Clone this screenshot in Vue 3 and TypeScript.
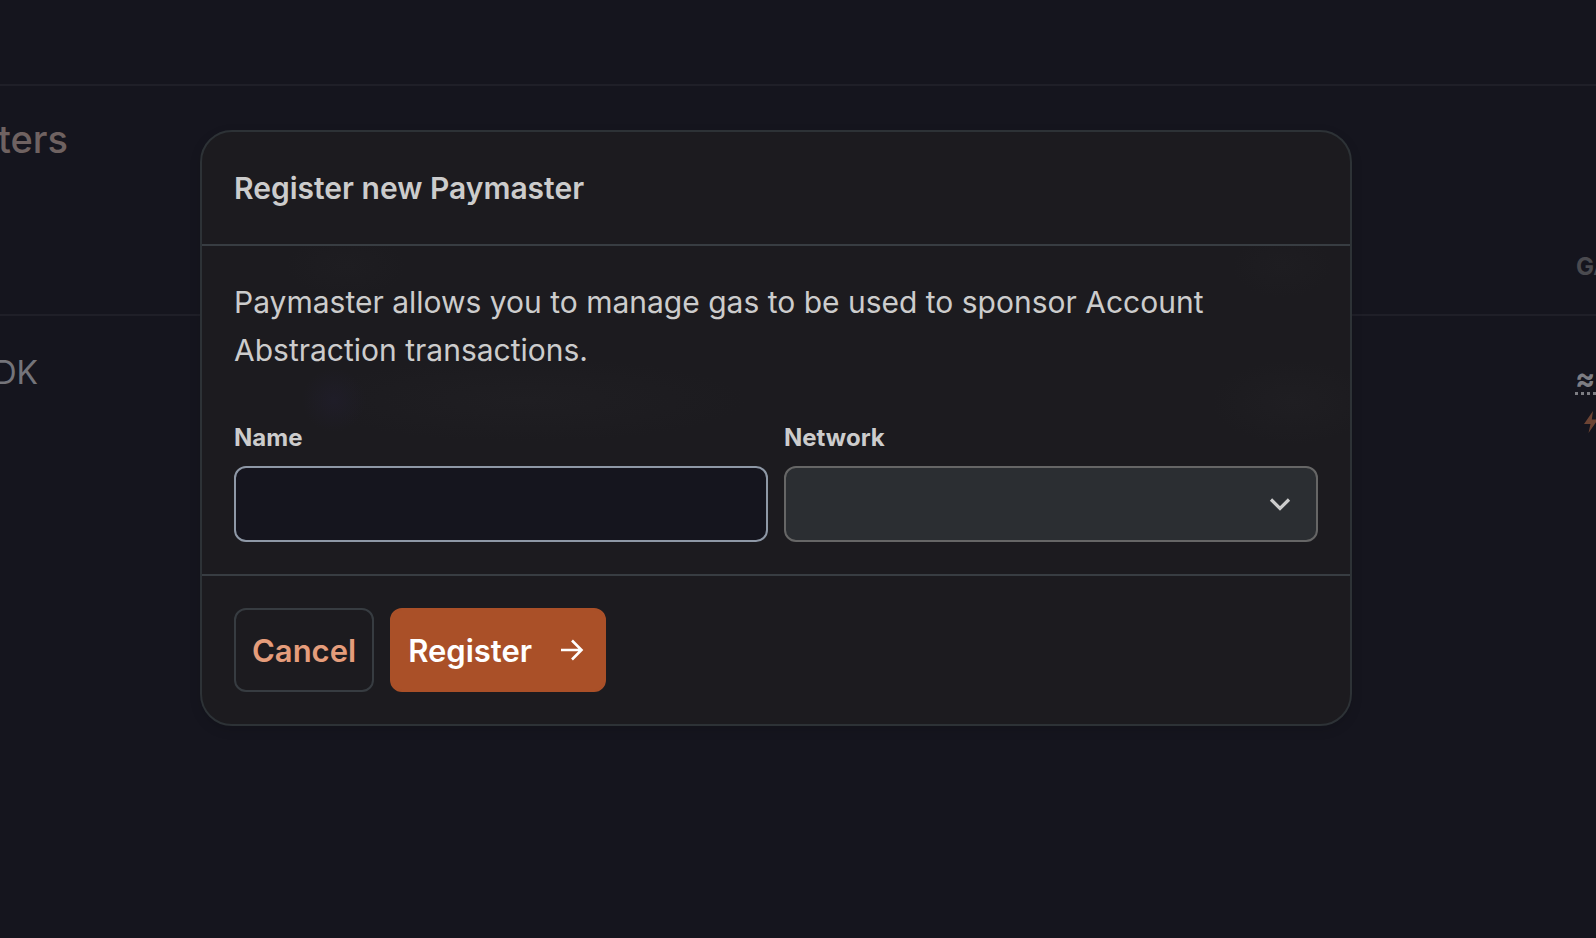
<script setup lang="ts">
import { ref } from 'vue'

const name = ref('')
const network = ref('')
</script>

<template>
  <div class="page">
    <div class="topbar"></div>
    <main>
      <h1 class="page-title">ters</h1>
      <div class="row row-head"><span class="column-label">GA</span></div>
      <div class="row row-item">
        <span class="item-name">DK</span>
        <div class="usage">
          <span class="approx">≈</span>
          <svg class="bolt" viewBox="0 0 20 24" aria-hidden="true">
            <path d="M10 1 L1 14 H7.500 L5.500 23 L15 9.500 H8.800 Z" />
          </svg>
        </div>
      </div>
    </main>

    <div class="overlay">
      <form class="dialog" role="dialog" aria-labelledby="dialog-title" @submit.prevent>
        <header class="dialog-head">
          <h2 id="dialog-title">Register new Paymaster</h2>
        </header>
        <section class="dialog-body">
          <p>Paymaster allows you to manage gas to be used to sponsor Account Abstraction transactions.</p>
          <div class="fields">
            <div class="field">
              <label for="name">Name</label>
              <input id="name" v-model="name" type="text" />
            </div>
            <div class="field">
              <label for="network">Network</label>
              <div class="select-wrap">
                <select id="network" v-model="network">
                  <option value=""></option>
                </select>
                <svg class="chevron" viewBox="0 0 24 24" aria-hidden="true">
                  <path d="M3 7.500 L12 16.500 L21 7.500" />
                </svg>
              </div>
            </div>
          </div>
        </section>
        <footer class="dialog-foot">
          <button type="button" class="cancel">Cancel</button>
          <button type="submit" class="register">
            <span>Register</span>
            <svg class="arrow" viewBox="0 0 32 32" aria-hidden="true">
              <path d="M5 16 H26 M16 6.500 L25.500 16 L16 25.500" />
            </svg>
          </button>
        </footer>
      </form>
    </div>
  </div>
</template>

<style>
body {
  margin: 0;
  background: #15151e;
}
</style>

<style scoped>
.page {
  position: relative;
  box-sizing: border-box;
  min-height: 100vh;
  overflow: hidden;
  background: #15151e;
  color: #cccccc;
  font-family: Inter, "Liberation Sans", sans-serif;
}
.page * {
  box-sizing: border-box;
}
.topbar {
  height: 86px;
  border-bottom: 2px solid #1f1f28;
}
.page-title {
  display: flex;
  justify-content: flex-end;
  width: 68px;
  margin: 0;
  padding-top: 28px;
  color: #6f6261;
  font-size: 38px;
  font-weight: 500;
  line-height: 50px;
}
.row {
  display: flex;
  justify-content: space-between;
}
.row-head {
  justify-content: flex-end;
  height: 152px;
  padding-top: 86px;
  border-bottom: 2px solid #1f1f28;
}
.column-label {
  width: 20px;
  color: #4a4a4f;
  font-size: 24px;
  font-weight: 700;
  line-height: 34px;
}
.item-name {
  display: flex;
  justify-content: flex-end;
  width: 38px;
  padding-top: 32px;
  color: #74747a;
  font-size: 32px;
  line-height: 50px;
}
.usage {
  display: flex;
  flex-direction: column;
  width: 21px;
  padding-top: 48px;
}
.approx {
  height: 31px;
  border-bottom: 3px dotted #7d7d83;
  color: #7d7d83;
  font-size: 30px;
  font-weight: 700;
  line-height: 28px;
}
.bolt {
  width: 20px;
  height: 24px;
  margin: 15px 0 0 8px;
  fill: #6d4434;
}
.overlay {
  position: absolute;
  inset: 0;
  padding: 130px 244px 130px 200px;
}
.dialog {
  border: 2px solid #2d3236;
  border-radius: 32px;
  background: #1c1b1f;
  box-shadow: 0 4px 12px rgba(0, 0, 0, 0.12);
}
.dialog-head {
  padding: 32px;
  border-bottom: 2px solid #383d42;
}
h2 {
  margin: 0;
  font-size: 30px;
  font-weight: 600;
  line-height: 48px;
}
.dialog-body {
  display: flex;
  flex-direction: column;
  gap: 48px;
  padding: 32px;
  background:
    radial-gradient(ellipse 32px 32px at 132px 154px, #1f1d28, rgba(28, 27, 31, 0)),
    radial-gradient(ellipse 220px 42px at 324px 154px, #1f1e22, #1c1b1f00),
    radial-gradient(ellipse 80px 42px at 1090px 156px, #1f1e22, #1c1b1f00),
    radial-gradient(ellipse 60px 32px at 144px 20px, #1e1d21, #1c1b1f00),
    radial-gradient(ellipse 50px 32px at 1080px 20px, #1e1d21, #1c1b1f);
}
.dialog-body p {
  margin: 0;
  font-size: 30px;
  line-height: 48px;
}
.fields {
  display: grid;
  grid-template-columns: 1fr 1fr;
  gap: 16px;
}
.field {
  display: flex;
  flex-direction: column;
  gap: 12px;
}
label {
  font-size: 24px;
  font-weight: 700;
  line-height: 32px;
}
input,
select {
  width: 100%;
  height: 76px;
  margin: 0;
  padding: 0 16px;
  border: 2px solid #8e98a6;
  border-radius: 12px;
  outline: none;
  background: #15151e;
  color: #cccccc;
  font: inherit;
  font-size: 30px;
}
select {
  display: block;
  appearance: none;
  border-color: #666666;
  background: #2b2e32;
}
.select-wrap {
  position: relative;
}
.chevron {
  position: absolute;
  top: 26px;
  right: 26px;
  width: 24px;
  height: 24px;
  fill: none;
  stroke: #cccccc;
  stroke-width: 3.2;
  pointer-events: none;
}
.dialog-foot {
  display: flex;
  gap: 16px;
  padding: 32px;
  border-top: 2px solid #383d42;
}
button {
  display: flex;
  align-items: center;
  height: 84px;
  padding: 0 16px;
  border: 2px solid #373c41;
  border-radius: 12px;
  background: transparent;
  color: #e59d7b;
  font: inherit;
  font-size: 31px;
  font-weight: 600;
}
.register {
  gap: 24px;
  border-color: #aa5028;
  background: #aa5028;
  color: #ffffff;
}
.arrow {
  width: 32px;
  height: 32px;
  fill: none;
  stroke: currentColor;
  stroke-width: 2.6;
}
</style>
